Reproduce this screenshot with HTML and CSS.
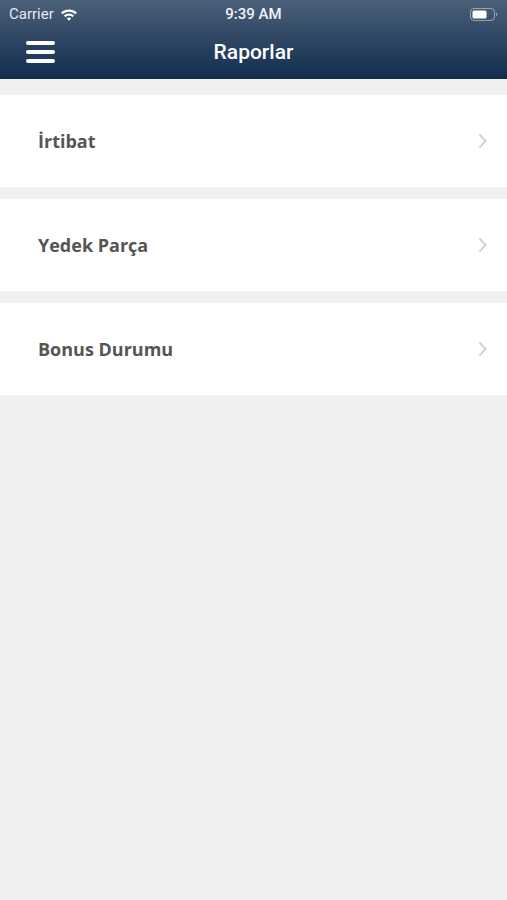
FILE: index.html
```html
<!DOCTYPE html>
<html lang="tr">

<head>
  <meta charset="UTF-8">
  <meta name="viewport" content="width=device-width, initial-scale=1.0">
  <title>Raporlar</title>
  <link rel="stylesheet" href="styles.css">
</head>

<body>
  <div class="header">
    <div class="statusbar">
      <div class="carrier">
        Carrier
        <svg class="wifi" width="18" height="13" viewBox="0 0 18 13">
          <path d="M9 1.5C5.9 1.5 3.1 2.7 1 4.7l1.6 1.6C4.3 4.7 6.5 3.7 9 3.7s4.7 1 6.4 2.6L17 4.7C14.9 2.7 12.1 1.5 9 1.5z" fill="#fff" />
          <path d="M9 5.6c-2 0-3.8.8-5.1 2l1.6 1.6C6.4 8.3 7.6 7.8 9 7.8s2.6.5 3.5 1.4l1.6-1.6C12.8 6.4 11 5.6 9 5.6z" fill="#fff" />
          <path d="M9 9.6c-.9 0-1.6.3-2.2.9L9 12.7l2.2-2.2C10.6 9.9 9.9 9.6 9 9.6z" fill="#fff" />
        </svg>
      </div>
      <div class="time">9:39 AM</div>
      <div class="battery">
        <svg width="28" height="13" viewBox="0 0 28 13">
          <rect x="0.5" y="0.5" width="24" height="12" rx="3.5" fill="none" stroke="rgba(255,255,255,0.45)" />
          <rect x="2.5" y="2.5" width="14" height="8" rx="1.5" fill="#fff" />
          <path d="M26 4.5v4c.8-.3 1.3-1.1 1.3-2s-.5-1.7-1.3-2z" fill="rgba(255,255,255,0.45)" />
        </svg>
      </div>
    </div>
    <div class="navbar">
      <div class="menu">
        <span></span>
        <span></span>
        <span></span>
      </div>
      <div class="title">Raporlar</div>
    </div>
  </div>

  <div class="list">
    <div class="item">
      <span class="label">İrtibat</span>
      <svg class="chevron" width="9" height="16" viewBox="0 0 9 16">
        <path d="M1.5 1.5L7.5 8l-6 6.5" fill="none" stroke="#c7c7cc" stroke-width="1.6" />
      </svg>
    </div>
    <div class="item">
      <span class="label">Yedek Parça</span>
      <svg class="chevron" width="9" height="16" viewBox="0 0 9 16">
        <path d="M1.5 1.5L7.5 8l-6 6.5" fill="none" stroke="#c7c7cc" stroke-width="1.6" />
      </svg>
    </div>
    <div class="item">
      <span class="label">Bonus Durumu</span>
      <svg class="chevron" width="9" height="16" viewBox="0 0 9 16">
        <path d="M1.5 1.5L7.5 8l-6 6.5" fill="none" stroke="#c7c7cc" stroke-width="1.6" />
      </svg>
    </div>
  </div>
</body>

</html>
```

FILE: styles.css
```css
* {
  margin: 0;
  padding: 0;
  box-sizing: border-box;
}

html,
body {
  width: 100%;
  height: 100%;
}

body {
  background-color: #f0f0f0;
  font-family: "Open Sans", "Liberation Sans", sans-serif;
}

.header {
  height: 79px;
  background-image: linear-gradient(#4b6079, #112c4d);
  color: #fff;
}

.statusbar {
  height: 28px;
  display: flex;
  align-items: center;
  justify-content: space-between;
  padding: 0 9px 0 9px;
  font-family: Roboto, "Liberation Sans", sans-serif;
}

.carrier {
  flex: 1;
  display: flex;
  align-items: center;
  gap: 6px;
  font-size: 15px;
  color: #e6e9ee;
}

.time {
  font-size: 15px;
  font-weight: 500;
  color: #f2f4f7;
}

.battery {
  flex: 1;
  display: flex;
  justify-content: flex-end;
}

.navbar {
  height: 51px;
  display: flex;
  align-items: center;
  justify-content: center;
  position: relative;
}

.menu {
  position: absolute;
  left: 26px;
  top: 13px;
  display: flex;
  flex-direction: column;
  gap: 5px;
}

.menu span {
  display: block;
  width: 29px;
  height: 4px;
  border-radius: 2px;
  background-color: #fff;
}

.title {
  font-family: Roboto, "Liberation Sans", sans-serif;
  font-size: 21px;
  font-weight: 500;
  margin-top: -3px;
}

.list {
  display: flex;
  flex-direction: column;
  gap: 12px;
  padding-top: 16px;
}

.item {
  height: 92px;
  background-color: #fff;
  display: flex;
  align-items: center;
  justify-content: space-between;
  padding: 0 20px 0 38px;
}

.label {
  font-size: 18px;
  font-weight: bold;
  color: #555555;
}
```
